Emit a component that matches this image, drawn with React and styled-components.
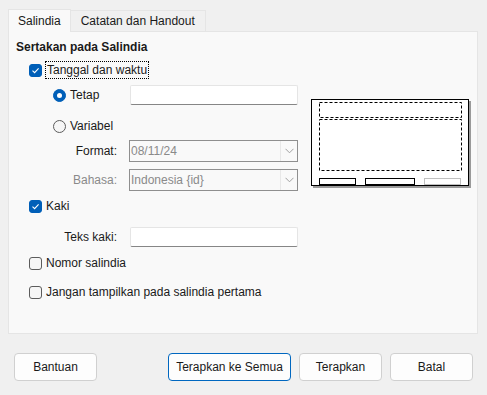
import React from 'react';
import styled, {createGlobalStyle} from "styled-components";

const Global = createGlobalStyle`
  html, body {
    margin: 0;
    background: #f0f0f0;
  }
  body {
    font-family: "Liberation Sans", "Noto Sans", sans-serif;
    font-size: 12px;
    color: #1a1a1a;
  }
`

const Dialog = styled.div`
  width: 487px;
  height: 395px;
  padding: 8px 0 0 8px;
  box-sizing: border-box;
`
const Tabs = styled.div`
  display: flex;
  align-items: flex-end;
  height: 23px;
`
const Tab = styled.div`
  height: ${p => p.active ? 23 : 21}px;
  padding: 0 ${p => p.active ? 9 : 10}px;
  box-sizing: border-box;
  display: flex;
  align-items: center;
  background: ${p => p.active ? '#f9f9f9' : '#f0f0f0'};
  border: 1px solid #e5e5e5;
  border-bottom: none;
  margin-bottom: ${p => p.active ? -1 : 0}px;
  position: relative;
  z-index: ${p => p.active ? 1 : 0};
  border-left: ${p => p.active ? '1px solid #e5e5e5' : 'none'};
`
const Panel = styled.div`
  width: 470px;
  height: 303px;
  box-sizing: border-box;
  background: #f9f9f9;
  border: 1px solid #e5e5e5;
  display: flex;
`
const Form = styled.div`
  width: 289px;
  display: flex;
  flex-direction: column;
`
const Heading = styled.div`
  font-weight: 700;
  margin: 7px 0 0 7px;
  height: 16px;
  line-height: 16px;
`
const Row = styled.div`
  display: flex;
  align-items: center;
  height: ${p => p.h || 18}px;
  margin-top: ${p => p.top}px;
  padding-left: ${p => p.indent || 0}px;
`
const FieldRow = styled.div`
  display: grid;
  grid-template-columns: 1fr ${p => p.w || 169}px;
  column-gap: ${p => p.gap ?? 12}px;
  align-items: center;
  margin-top: ${p => p.top}px;
  padding-left: ${p => p.indent || 0}px;
`
const Label = styled.span`
  justify-content: ${p => p.left ? 'flex-start' : 'flex-end'};
  color: ${p => p.disabled ? '#8a8a8a' : '#1a1a1a'};
  display: flex;
  align-items: center;
`
const Focus = styled.span`
  outline: 1px dotted #000;
  padding: 0 1px;
  line-height: 16px;
`
const Box = styled.span`
  width: 13px;
  height: 13px;
  box-sizing: border-box;
  border-radius: 3px;
  flex: none;
  margin-right: 4px;
  display: inline-flex;
  align-items: center;
  justify-content: center;
  background: ${p => p.checked ? '#005fb8' : '#f6f6f6'};
  border: 1px solid ${p => p.checked ? '#005fb8' : '#5c5c5c'};
`
const Radio = styled.span`
  width: 13px;
  height: 13px;
  box-sizing: border-box;
  border-radius: 50%;
  flex: none;
  margin-right: 4px;
  display: inline-flex;
  align-items: center;
  justify-content: center;
  background: ${p => p.checked ? '#005fb8' : '#f6f6f6'};
  border: 1px solid ${p => p.checked ? '#005fb8' : '#5c5c5c'};
  &::after {
    content: '';
    display: ${p => p.checked ? 'block' : 'none'};
    width: 5px;
    height: 5px;
    border-radius: 50%;
    background: #fff;
  }
`
const Input = styled.div`
  height: 20px;
  box-sizing: border-box;
  background: #fff;
  border: 1px solid #e5e5e5;
  border-bottom: 1px solid #868686;
  border-radius: 2px;
`
const Combo = styled.div`
  height: 22px;
  box-sizing: border-box;
  border: 1px solid #8f8f8f;
  background: #f9f9f9;
  color: #8a8a8a;
  display: flex;
  align-items: center;
  padding-left: 1px;
  span { flex: 1; }
`
const Drop = styled.div`
  width: 17px;
  height: 20px;
  box-sizing: border-box;
  border-left: 1px solid #e8e8e8;
  display: flex;
  align-items: center;
  justify-content: center;
`
const Preview = styled.div`
  padding: 67px 0 0 13px;
`
const Buttons = styled.div`
  display: flex;
  margin-top: 19px;
  padding-left: 6px;
  gap: 8px;
`
const Button = styled.div`
  width: ${p => p.w || 83}px;
  height: 28px;
  box-sizing: border-box;
  display: flex;
  align-items: center;
  justify-content: center;
  background: #fdfdfd;
  border: 1px solid ${p => p.primary ? '#0067c0' : '#d0d0d0'};
  border-radius: 4px;
  margin-left: ${p => p.gapLeft || 0}px;
`

const Check = () => (
    <svg width="9" height="9" viewBox="0 0 9 9">
        <path d="M1.5 4.6 L3.6 6.6 L7.6 2.4" fill="none" stroke="#fff" strokeWidth="1.1"/>
    </svg>
)

const Chevron = () => (
    <svg width="9" height="6" viewBox="0 0 9 6">
        <path d="M0.5 0.8 L4.5 4.8 L8.5 0.8" fill="none" stroke="#a0a0a0" strokeWidth="1"/>
    </svg>
)

const SlideLayout = () => (
    <svg width="161" height="90" viewBox="0 0 161 90">
        <rect x="2" y="2" width="158" height="87" fill="#9a9a9a"/>
        <rect x="0.5" y="0.5" width="157" height="86" fill="#fff" stroke="#000"/>
        <g fill="none" stroke="#000" strokeDasharray="3 2">
            <rect x="8.5" y="3.5" width="142" height="15"/>
            <rect x="8.5" y="20.5" width="142" height="51"/>
        </g>
        <rect x="8.5" y="79.5" width="36" height="6" fill="none" stroke="#000"/>
        <rect x="54.5" y="79.5" width="49" height="6" fill="none" stroke="#000"/>
        <rect x="113.5" y="79.5" width="36" height="6" fill="none" stroke="#c0c0c0"/>
    </svg>
)

const App = () => {
    return (
        <Dialog>
            <Global/>
            <Tabs>
                <Tab active>Salindia</Tab>
                <Tab>Catatan dan Handout</Tab>
            </Tabs>
            <Panel>
                <Form>
                    <Heading>Sertakan pada Salindia</Heading>
                    <Row top={6} indent={20}>
                        <Box checked><Check/></Box>
                        <Focus>Tanggal dan waktu</Focus>
                    </Row>
                    <FieldRow top={6} indent={44} w={168} gap={0}>
                        <Label left><Radio checked/>Tetap</Label>
                        <Input/>
                    </FieldRow>
                    <Row top={12} indent={44}>
                        <Radio/>Variabel
                    </Row>
                    <FieldRow top={5}>
                        <Label>Format:</Label>
                        <Combo><span>08/11/24</span><Drop><Chevron/></Drop></Combo>
                    </FieldRow>
                    <FieldRow top={7}>
                        <Label disabled>Bahasa:</Label>
                        <Combo><span>Indonesia {'{id}'}</span><Drop><Chevron/></Drop></Combo>
                    </FieldRow>
                    <Row top={6} indent={20}>
                        <Box checked><Check/></Box>Kaki
                    </Row>
                    <FieldRow top={12} w={168} gap={13}>
                        <Label>Teks kaki:</Label>
                        <Input/>
                    </FieldRow>
                    <Row top={7} indent={20}>
                        <Box/>Nomor salindia
                    </Row>
                    <Row top={11} indent={20}>
                        <Box/>Jangan tampilkan pada salindia pertama
                    </Row>
                </Form>
                <Preview>
                    <SlideLayout/>
                </Preview>
            </Panel>
            <Buttons>
                <Button>Bantuan</Button>
                <Button primary w={123} gapLeft={63}>Terapkan ke Semua</Button>
                <Button>Terapkan</Button>
                <Button>Batal</Button>
            </Buttons>
        </Dialog>
    );
};

export default App;
